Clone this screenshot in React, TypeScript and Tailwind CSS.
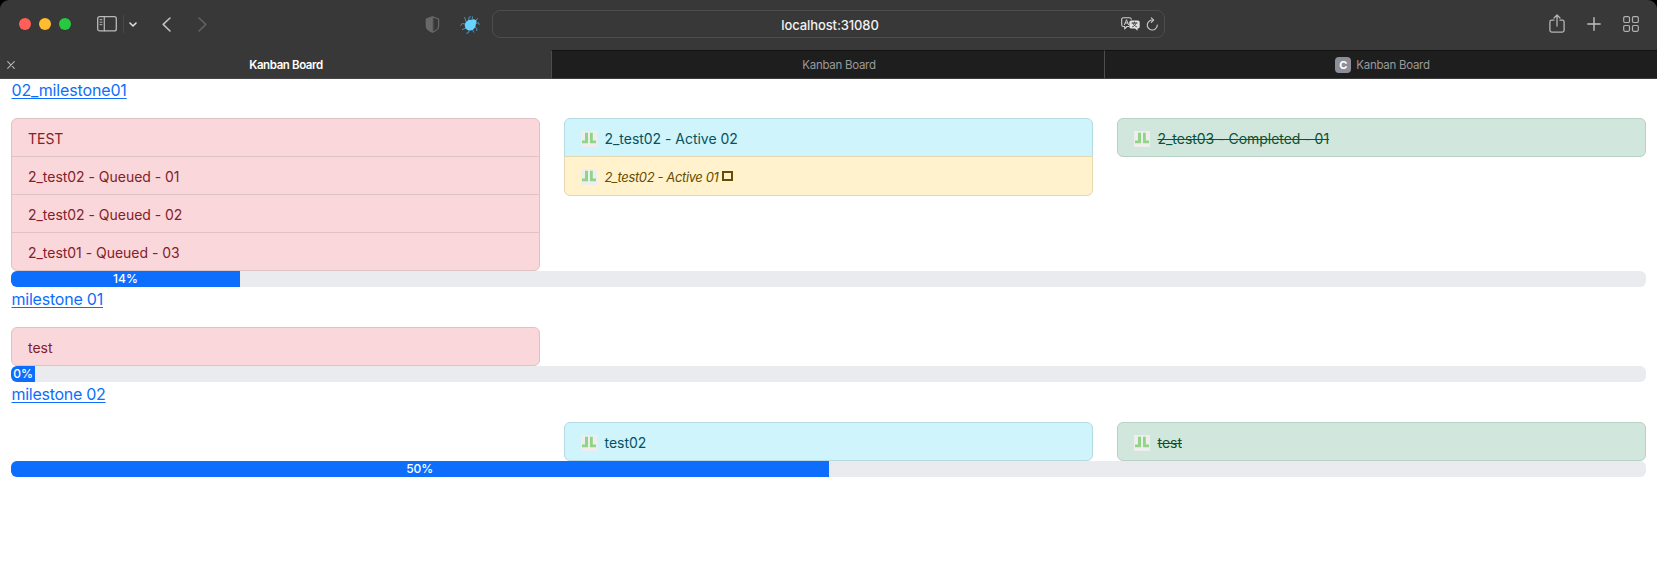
import type { ReactNode } from 'react';

type Tone = 'queued' | 'active' | 'waiting' | 'done';
type Task = { title: string; tone: Tone };
type Milestone = { name: string; nameStyle: string; percent: string; barWidth: string; columns: Task[][] };

const milestones: Milestone[] = [
  {
    name: '02_milestone01',
    nameStyle: 'tracking-[-0.15px]',
    percent: '14%',
    barWidth: 'w-[229px]',
    columns: [
      [
        { title: 'TEST', tone: 'queued' },
        { title: '2_test02 - Queued - 01', tone: 'queued' },
        { title: '2_test02 - Queued - 02', tone: 'queued' },
        { title: '2_test01 - Queued - 03', tone: 'queued' },
      ],
      [
        { title: '2_test02 - Active 02', tone: 'active' },
        { title: '2_test02 - Active 01', tone: 'waiting' },
      ],
      [{ title: '2_test03 - Completed - 01', tone: 'done' }],
    ],
  },
  {
    name: 'milestone 01',
    nameStyle: 'tracking-[-0.22px]',
    percent: '0%',
    barWidth: 'w-[24px]',
    columns: [[{ title: 'test', tone: 'queued' }], [], []],
  },
  {
    name: 'milestone 02',
    nameStyle: 'tracking-[-0.27px]',
    percent: '50%',
    barWidth: 'w-[817.5px]',
    columns: [[], [{ title: 'test02', tone: 'active' }], [{ title: 'test', tone: 'done' }]],
  },
];

const tones: Record<Tone, string> = {
  queued: 'h-[39px] bg-[#f9d7da] text-[#842029] border-[#dfc2c4]',
  active: 'h-[39px] bg-[#cff4fc] text-[#055160] border-[#b5dae2]',
  waiting: 'h-10 bg-[#fff2cd] text-[#664d03] border-[#e5d8b0]',
  done: 'h-[39px] bg-[#d1e7dd] text-[#0f5132] border-[#b9d0c5]',
};

function Avatar() {
  return (
    <svg className="mt-[2px] mr-[7.5px] h-4 w-4 shrink-0" viewBox="0 0 16 16">
      <rect width="16" height="16" fill="#eeeeee" />
      <path d="M4 1.7h3v10.6H1V9.5h3zM9 1.7h2.8v7.8H15v2.8H9z" fill="#8fd487" />
    </svg>
  );
}

function TaskRow({ task }: { task: Task }) {
  const text =
    task.tone === 'waiting'
      ? 'italic text-[13px] tracking-[-0.38px]'
      : task.tone === 'done'
        ? 'text-sm tracking-[-0.03px] line-through'
        : 'text-sm tracking-[-0.03px]';
  return (
    <li
      className={`-mt-px flex items-center border px-4 first:mt-0 first:rounded-t-[6px] last:rounded-b-[6px] ${tones[task.tone]}`}
    >
      {task.tone !== 'queued' && <Avatar />}
      <span className={`pt-[2px] leading-5 whitespace-nowrap ${text}`}>{task.title}</span>
      {task.tone === 'waiting' && <span className="ml-[4px] h-[10px] w-[11px] border-2 border-[#664d03]" />}
    </li>
  );
}

function MilestoneSection({ item }: { item: Milestone }) {
  return (
    <section>
      <header className="h-10 pl-[0.5px]">
        <a
          href="#"
          className={`block w-fit text-base leading-6 text-[#0d6efd] underline decoration-1 underline-offset-[2px] ${item.nameStyle}`}
        >
          {item.name}
        </a>
      </header>
      <div className="grid grid-cols-3 gap-6">
        {item.columns.map((tasks, c) => (
          <ul key={c}>
            {tasks.map((t) => (
              <TaskRow key={t.title} task={t} />
            ))}
          </ul>
        ))}
      </div>
      <div className="flex h-4 overflow-hidden rounded-[6px] bg-[#e9ebef]">
        <div
          className={`flex items-center justify-center bg-[#0d6efd] text-xs leading-4 font-medium text-white ${item.barWidth}`}
        >
          {item.percent}
        </div>
      </div>
    </section>
  );
}

function Icon({ className, box, children }: { className: string; box: string; children: ReactNode }) {
  return (
    <svg
      className={`shrink-0 ${className}`}
      viewBox={box}
      fill="none"
      stroke="currentColor"
      strokeLinecap="round"
      strokeLinejoin="round"
    >
      {children}
    </svg>
  );
}

function Toolbar() {
  return (
    <div className="flex h-[50px] items-center rounded-t-[9px] bg-[#383838] pb-[2px] text-[#b9b9b9]">
      <div className="flex w-[492px] items-center pl-[19px]">
        <span className="h-3 w-3 rounded-full bg-[#ff5f57]" />
        <span className="ml-2 h-3 w-3 rounded-full bg-[#febc2e]" />
        <span className="ml-2 h-3 w-3 rounded-full bg-[#28c840]" />
        <Icon className="ml-[26px] h-4 w-5" box="0 0 20 16">
          <rect x=".7" y=".7" width="18.6" height="14.2" rx="2" strokeWidth="1.3" />
          <path d="M7.3 1v13.8" strokeWidth="1.2" />
          <path d="M3 3.7h2M3 6.2h2M3 8.7h2" strokeWidth="1" />
        </Icon>
        <span className="ml-[6px] h-[18px] w-px bg-[#484848]" />
        <Icon className="ml-[5px] h-[5px] w-2 text-[#dedede]" box="0 0 8 5">
          <path d="M1 1l3 3 3-3" strokeWidth="1.6" />
        </Icon>
        <Icon className="ml-[25px] h-[15px] w-[9px] text-[#c4c4c4]" box="0 0 9 15">
          <path d="M8 1L1.2 7.4 8 14" strokeWidth="1.5" />
        </Icon>
        <Icon className="ml-[27px] h-[15px] w-[9px] text-[#626262]" box="0 0 9 15">
          <path d="M1 1l6.8 6.4L1 14" strokeWidth="1.5" />
        </Icon>
        <Icon className="ml-[218px] h-[17px] w-[15px] text-[#686868]" box="0 0 15 17">
          <path d="M7.5.9L13.6 3v7.6c0 2.6-3 4.4-6.1 5.6-3.1-1.2-6.1-3-6.1-5.6V3z" strokeWidth="1.2" />
          <path d="M7.5.9L1.4 3v7.6c0 2.6 3 4.4 6.1 5.6z" fill="currentColor" strokeWidth="1" />
        </Icon>
        <Icon className="mt-[2px] ml-5 h-[18px] w-[20px] text-[#4f91ba]" box="0 0 20 18">
          <path
            d="M6 5.5L4.800 1.500M8.500 4.500L9 1.200l1.500-.4M12 4l.5-3.200M15.500 5l2-2.500M16 7.500l2.500-.8.700 1.800M5 8L2 7.500.8 9.500M6 12l-3.500 1.500M9 14l-.5 2.800-1.800.4M12.500 13.500l1.200 2.700M15 11l1.800 1.500v2"
            strokeWidth="1"
          />
          <path
            d="M8.200 4.300c2-.9 3.800.1 5.200-1 .9-.3 2.700.7 3.200 1.800.3.900-.8 1.800-.8 3.300 0 3.500-3 6.300-6.400 6-2.600-.2-4.500-2.100-4.600-4.600C4.700 7.600 6.100 5.200 8.200 4.300z"
            fill="#66d4ff"
            stroke="none"
          />
        </Icon>
      </div>
      <div className="flex h-7 w-[673px] items-center rounded-[8px] border border-[#4d4d4d] bg-[#383838]">
        <span className="ml-[46px] flex-1 pt-[2px] text-center text-[13px] leading-5 font-medium tracking-[-0.1px] text-[#f2f2f2]">
          localhost:31080
        </span>
        <Icon className="h-[15px] w-[19px] text-[#cfcfcf]" box="0 0 19 15">
          <path
            d="M7.500 9.500H6l-2.300 2.300V9.500H2.500A1.800 1.800 0 01.7 7.700V2.500A1.800 1.800 0 012.500.7h6a1.800 1.800 0 011.800 1.500"
            strokeWidth="1.100"
          />
          <path d="M3.500 7.700l2-5 2 5M4.200 6h2.600" strokeWidth="1" />
          <path
            d="M10 3.500h7A1.700 1.700 0 0118.700 5.200v4.500a1.700 1.700 0 01-1.700 1.700h-.5v2.300l-2.400-2.300H10a1.700 1.700 0 01-1.700-1.700V5.200A1.700 1.700 0 0110 3.500z"
            fill="#e1e1e1"
            stroke="none"
          />
          <path d="M11 6h5M13.500 5v1M15.200 6c-.6 2-2 3.100-3.700 3.800M11.900 6c.6 2 2 3.100 3.700 3.800" stroke="#383838" strokeWidth=".9" />
        </Icon>
        <Icon className="mr-[5px] ml-[6px] h-[14px] w-[13px] text-[#c4c4c4]" box="0 0 13 14">
          <path d="M7.300 3.100A5 5 0 1011.300 8" strokeWidth="1.200" />
          <path d="M5.300.8l2.300 2.300-2.300 2.300" strokeWidth="1.200" />
        </Icon>
      </div>
      <div className="flex flex-1 items-center justify-end pr-[18.5px]">
        <Icon className="mb-[2px] h-[19px] w-4 text-[#b3b3b3]" box="0 0 16 19">
          <path
            d="M5 6.200H2.700A1.800 1.800 0 00.9 8v8.300a1.800 1.800 0 001.800 1.800h10.600a1.800 1.800 0 001.800-1.800V8a1.800 1.800 0 00-1.800-1.800H11M8 12V1.200M5 4l3-3 3 3"
            strokeWidth="1.300"
          />
        </Icon>
        <Icon className="mb-px ml-[21.5px] h-[14px] w-[14px] text-[#c0c0c0]" box="0 0 14 14">
          <path d="M7 .8v12.400M.8 7h12.400" strokeWidth="1.400" />
        </Icon>
        <Icon className="mb-px ml-[22px] h-4 w-4 text-[#b0b0b0]" box="0 0 16 16">
          <rect x=".7" y=".7" width="5.800" height="5.800" rx="1.200" strokeWidth="1.200" />
          <rect x="9.500" y=".7" width="5.800" height="5.800" rx="1.200" strokeWidth="1.200" />
          <rect x=".7" y="9.500" width="5.800" height="5.800" rx="1.200" strokeWidth="1.200" />
          <rect x="9.500" y="9.500" width="5.800" height="5.800" rx="1.200" strokeWidth="1.200" />
        </Icon>
      </div>
    </div>
  );
}

function Tabs() {
  return (
    <div className="flex h-[29px] bg-[#383838] text-[11.5px] leading-[29px] tracking-[-0.28px]">
      <div className="flex w-[551px] items-center border-b border-[#484848] text-white">
        <Icon className="mt-[2px] ml-[7px] h-2 w-2 text-[#b5b5b5]" box="0 0 8 8">
          <path d="M.7.7l6.600 6.600M7.300.7L.7 7.300" strokeWidth="1.100" />
        </Icon>
        <span className="flex-1 pt-[2px] pl-[6px] text-center font-semibold tracking-[-0.4px]">Kanban Board</span>
      </div>
      <div className="w-[553px] border-t border-b border-l border-t-[#111111] border-b-[#3d3d3d] border-l-[#4d4d4d] bg-[#1e1e1e] pl-[22px] text-center leading-[28px] text-[#9a9a9a]">
        Kanban Board
      </div>
      <div className="flex flex-1 items-center justify-center border-t border-b border-l border-t-[#111111] border-b-[#3d3d3d] border-l-[#4d4d4d] bg-[#1e1e1e] pl-[3px] text-[#9a9a9a]">
        <span className="mr-[5px] flex h-4 w-4 items-center justify-center rounded-[4px] bg-[#8e8e99] text-[11px] leading-4 font-bold text-white">
          C
        </span>
        <span className="pt-px">Kanban Board</span>
      </div>
    </div>
  );
}

export default function App() {
  return (
    <div className="h-[574px] w-[1657px] overflow-hidden bg-white font-['Inter',sans-serif]">
      <div className="bg-black">
        <Toolbar />
        <Tabs />
      </div>
      <main className="-mt-px px-[11px]">
        {milestones.map((m) => (
          <MilestoneSection key={m.name} item={m} />
        ))}
      </main>
    </div>
  );
}
